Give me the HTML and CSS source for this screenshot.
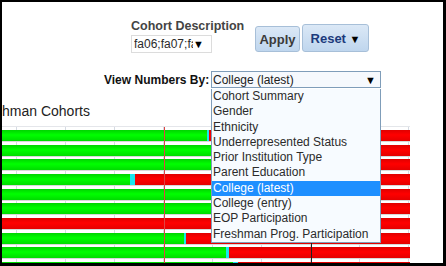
FILE: index.html
```html
<!DOCTYPE html>
<html lang="en">

<head>
    <meta charset="UTF-8">
    <title>Cohorts</title>
    <link rel="stylesheet" href="styles.css">
</head>

<body>
    <div class="frame">

        <div class="toolbar">
            <div class="cohort">
                <label class="lbl">Cohort Description</label>
                <div class="pick">
                    <span class="pick-txt">fa06;fa07;fa08</span>
                    <span class="arrow">&#9660;</span>
                </div>
            </div>
            <button class="btn apply">Apply</button>
            <button class="btn reset">Reset <span class="arrow">&#9660;</span></button>
        </div>

        <div class="viewrow">
            <span class="lbl">View Numbers By:</span>
            <div class="sel">
                <span>College (latest)</span>
                <span class="arrow">&#9660;</span>
            </div>
        </div>

        <h3 class="title">Freshman Cohorts</h3>

        <div class="chart">
            <div class="bar"><i class="g" style="width:205px"></i><i class="c" style="width:2px"></i><i class="r"></i></div>
            <div class="bar"><i class="g" style="width:290px"></i><i class="c" style="width:3px"></i><i class="r"></i></div>
            <div class="bar"><i class="g" style="width:285px"></i><i class="c" style="width:3px"></i><i class="r"></i></div>
            <div class="bar"><i class="g" style="width:128px"></i><i class="c" style="width:5px"></i><i class="r"></i></div>
            <div class="bar"><i class="g" style="width:280px"></i><i class="c" style="width:3px"></i><i class="r"></i></div>
            <div class="bar"><i class="g" style="width:295px"></i><i class="c" style="width:3px"></i><i class="r"></i></div>
            <div class="bar"><i class="r"></i></div>
            <div class="bar"><i class="g" style="width:182px"></i><i class="c" style="width:2px"></i><i class="r"></i></div>
            <div class="bar"><i class="g" style="width:224px"></i><i class="c" style="width:3px"></i><i class="r"></i></div>
            <div class="bar"><i class="g" style="width:231px"></i><i class="c" style="width:5px"></i><i class="r"></i></div>

            <div class="mark red"></div>
            <div class="mark black"></div>
        </div>

        <ul class="list">
            <li>Cohort Summary</li>
            <li>Gender</li>
            <li>Ethnicity</li>
            <li>Underrepresented Status</li>
            <li>Prior Institution Type</li>
            <li>Parent Education</li>
            <li class="on">College (latest)</li>
            <li>College (entry)</li>
            <li>EOP Participation</li>
            <li>Freshman Prog. Participation</li>
        </ul>

    </div>
</body>

</html>
```

FILE: styles.css
```css
* {
    padding: 0;
    margin: 0;
    box-sizing: border-box;
}

body {
    background: #fff;
    font-family: "Liberation Sans", Arial, sans-serif;
    font-size: 12px;
    color: #2b2b2b;
}

.frame {
    width: 446px;
    height: 266px;
    border: solid #000;
    border-width: 2px 3px 3px 2px;
    overflow: hidden;
    position: relative;
    background: #fff;
}

.toolbar {
    display: flex;
    align-items: flex-end;
    padding: 17px 0 0 129px;
}

.cohort {
    display: flex;
    flex-direction: column;
    width: 124px;
}

.lbl {
    font-weight: bold;
    font-size: 12.5px;
    color: #444;
    white-space: nowrap;
}

.pick {
    width: 81px;
    height: 18px;
    margin-top: 2px;
    border: 1px solid #dcdcdc;
    display: flex;
    align-items: center;
    padding-left: 2px;
    overflow: hidden;
    font-size: 12px;
}

.pick-txt {
    width: 59px;
    overflow: hidden;
    white-space: nowrap;
    flex: none;
}

.arrow {
    font-size: 11px;
    color: #000;
}

.btn {
    font-family: inherit;
    font-weight: bold;
    font-size: 13px;
    border: 1px solid #a7bfd8;
    border-radius: 3px;
    background: linear-gradient(#dbe8f6, #bfd6ee);
    cursor: pointer;
}

.apply {
    width: 45px;
    height: 26px;
    color: #3a3a3a;
    margin-bottom: 1px;
}

.reset {
    width: 67px;
    height: 28px;
    margin-left: 2px;
    margin-bottom: 1px;
    color: #1c3a7c;
}

.viewrow {
    display: flex;
    align-items: center;
    padding-left: 102px;
    margin-top: 18px;
}

.viewrow .lbl {
    font-size: 12px;
    color: #111;
    width: 107px;
    padding-right: 5px;
    text-align: right;
}

.sel {
    width: 170px;
    height: 17px;
    border: 1px solid #7f9db9;
    background: #f6f9fd;
    display: flex;
    justify-content: space-between;
    align-items: center;
    padding: 0 4px 0 1px;
    color: #222;
}

.title {
    font-weight: normal;
    font-size: 14px;
    color: #222;
    margin: 15px 0 0 -28px;
    white-space: nowrap;
}

.chart {
    position: relative;
    width: 408px;
    margin-top: 7px;
    padding-top: 3px;
    height: 150px;
    background: repeating-linear-gradient(90deg, transparent 0 14px, #d5dbe3 14px 15px, transparent 15px 49px);
    border-top: 1px solid #e4e6ea;
}

.bar {
    display: flex;
    height: 11px;
    margin-bottom: 3.67px;
    box-shadow: 0 1px 0 #d8d8d8;
}

.bar i {
    display: block;
    height: 100%;
}

.g {
    background: linear-gradient(#00d400, #00ff00 45%, #00dc00);
}

.c {
    background: #19e6f0;
}

.r {
    flex: 1;
    background: linear-gradient(#e00000, #ff0000 45%, #e40000);
}

.mark {
    position: absolute;
    top: 0;
    bottom: 0;
    width: 1px;
}

.red {
    left: 162px;
    background: #d44;
}

.black {
    left: 309px;
    background: #222;
}

.list {
    position: absolute;
    left: 209px;
    top: 87px;
    width: 170px;
    list-style: none;
    border: 1px solid #7f9db9;
    border-top: none;
    background: #f7fbff;
    color: #2b2b2b;
}

.list li {
    height: 15.3px;
    line-height: 15.3px;
    padding-left: 1px;
    white-space: nowrap;
}

.list .on {
    background: #1e8fff;
    color: #fff;
}
```
